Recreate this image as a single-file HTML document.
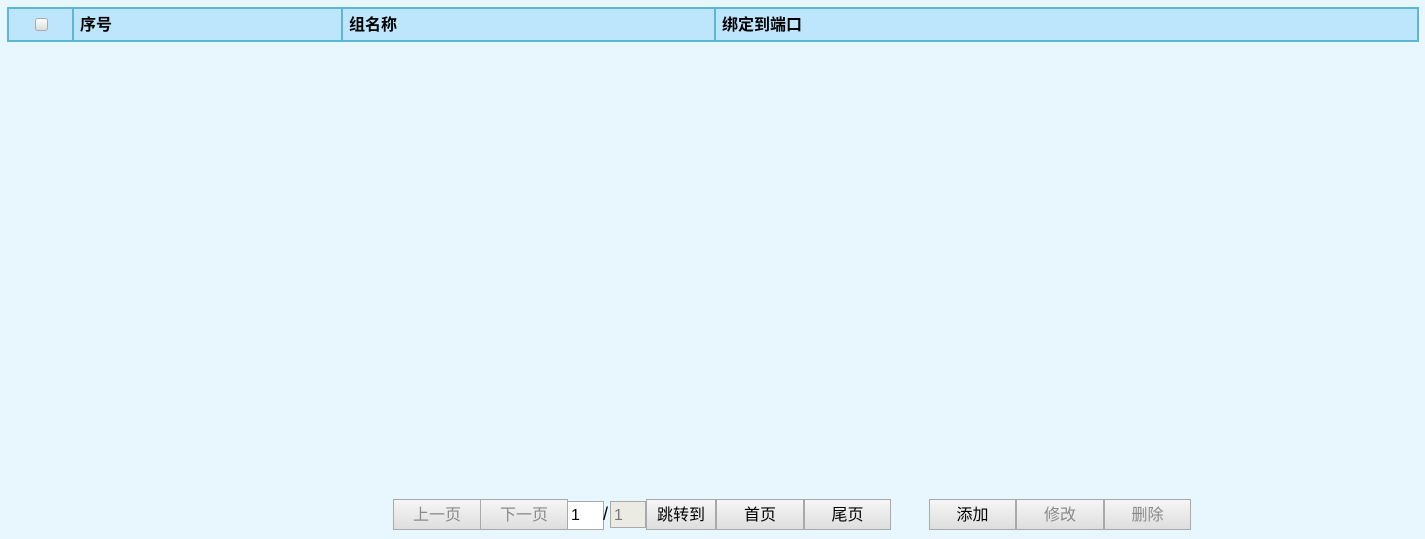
<!DOCTYPE html>
<html><head><meta charset="utf-8"><style>
body{margin:0;width:1425px;height:539px;background:#e8f7fe;font-family:"Liberation Sans","Noto Sans CJK SC",sans-serif;position:relative;overflow:hidden}
.hd{position:absolute;left:7px;top:7px;width:1408px;height:31px;background:#bde6fd;border:2px solid #5cb7d5}
.c{position:absolute;top:0;height:31px;border-left:2px solid #5cb7d5;font-weight:bold;font-size:16px;line-height:34px;padding-left:6px;color:#000}
.cb{position:absolute;left:26px;top:9px;width:11px;height:11px;border:1px solid #aaa;border-radius:3px;background:linear-gradient(#fdfdfd,#dcdcdc)}
.b{position:absolute;top:499px;height:29px;border:1px solid #a9a9a9;background:linear-gradient(#f6f6f6,#dedede);font-size:16px;line-height:32px;text-align:center;color:#000;box-sizing:content-box}
.d{color:#8a8a8a}
.in{position:absolute;top:501px;height:27px;border:1px solid #a9a9a9;font-size:16px;line-height:28px;padding-left:3px;box-sizing:border-box}
</style></head><body>
<div class="hd">
<div class="cb"></div>
<div class="c" style="left:63px">序号</div>
<div class="c" style="left:332px">组名称</div>
<div class="c" style="left:705px">绑定到端口</div>
</div>
<div class="b d" style="left:393px;width:86px">上一页</div>
<div class="b d" style="left:480px;width:86px">下一页</div>
<div class="in" style="left:567px;width:37px;background:#fff;height:29px;top:501px">1</div>
<div style="position:absolute;left:603px;top:504px;font-size:18px">/</div>
<div class="in" style="left:610px;width:36px;background:#ebebe4;color:#777">1</div>
<div class="b" style="left:646px;width:68px">跳转到</div>
<div class="b" style="left:716px;width:86px">首页</div>
<div class="b" style="left:804px;width:85px">尾页</div>
<div class="b" style="left:929px;width:85px">添加</div>
<div class="b d" style="left:1016px;width:86px">修改</div>
<div class="b d" style="left:1104px;width:85px">删除</div>
</body></html>
